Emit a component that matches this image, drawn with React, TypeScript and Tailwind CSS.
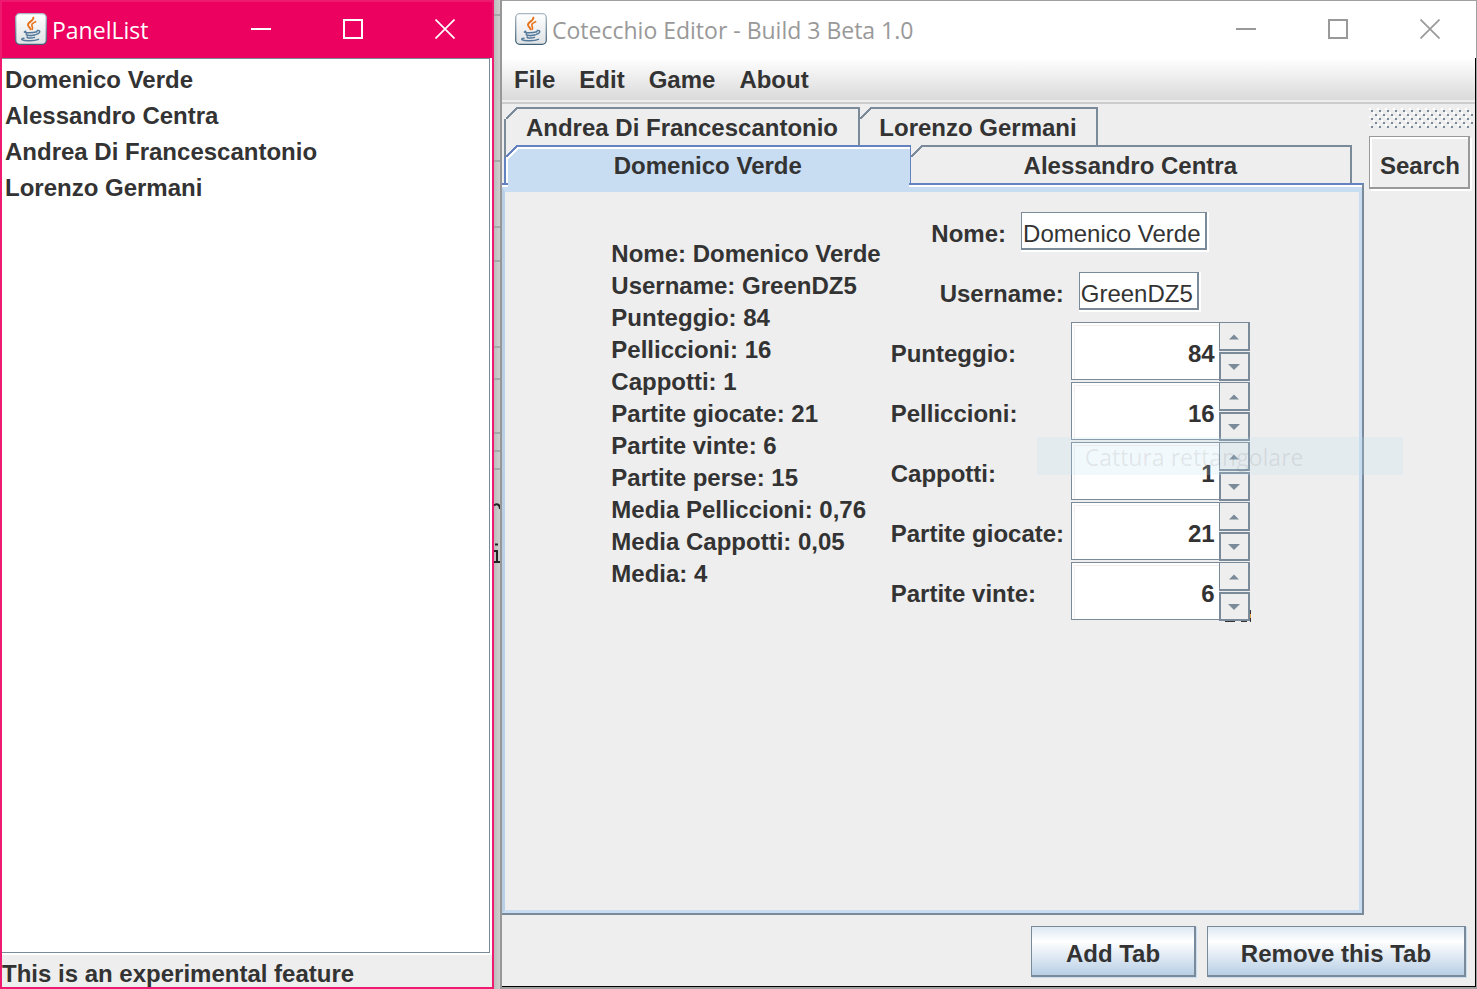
import React, { useState } from "react";

function JavaIcon() {
  return (
    <svg width="32" height="32" viewBox="0 0 32 32" aria-hidden="true" className="shrink-0">
      <defs>
        <linearGradient id="tile" x1="0" y1="0" x2="0" y2="1">
          <stop offset="0" stopColor="#ffffff" />
          <stop offset="1" stopColor="#dfe3e5" />
        </linearGradient>
        <linearGradient id="edge" x1="0" y1="0" x2="0" y2="1">
          <stop offset="0" stopColor="#a9b9c4" />
          <stop offset="1" stopColor="#3f6076" />
        </linearGradient>
      </defs>
      <rect x="0.7" y="0.7" width="30.6" height="30.6" rx="4" fill="url(#tile)" stroke="url(#edge)" strokeWidth="1.3" />
      <g fill="none" strokeLinecap="round">
        <path d="M18.300 4.600c1 3-5.600 4.300-5.300 7.400.2 1.700 2 2.500 2.600 4.400" stroke="#e8731a" strokeWidth="1.900" />
        <path d="M20.600 8.700c-2.600 1.100-4.300 2.300-3.700 4.100.4 1.200 1.200 1.800.3 3.500" stroke="#e8731a" strokeWidth="1.600" />
        <path d="M10.800 18.200c-2 .6-2 1.200 0 1.400 3.700.4 8 .1 11.200-.8" stroke="#54799a" strokeWidth="1.500" />
        <path d="M11.500 21c-.6 1 .4 1.400 3 1.500 2.300.1 4.300-.1 5.700-.7" stroke="#54799a" strokeWidth="1.700" />
        <path d="M12.200 23.800c-.4 1 .8 1.300 3 1.300 1.700 0 3.100-.2 4.300-.7" stroke="#54799a" strokeWidth="1.500" />
        <path d="M22.300 17.600c2-.5 2.800.4 2.300 1.600-.4 1-1.700 1.800-3 2.100" stroke="#54799a" strokeWidth="1.500" />
        <path d="M9 25.200c-3.300.7-3 1.700.5 2.200 4.500.6 11 .3 14-1" stroke="#54799a" strokeWidth="1.500" />
      </g>
    </svg>
  );
}

function WindowControls() {
  return (
    <div className="ml-auto flex">
      <button aria-label="Minimize" className="flex h-12 w-[92px] items-center justify-center">
        <svg width="20" height="20" viewBox="0 0 20 20" fill="none" stroke="currentColor" strokeWidth="2">
          <path d="M0 10H20" />
        </svg>
      </button>
      <button aria-label="Maximize" className="flex h-12 w-[92px] items-center justify-center">
        <svg width="20" height="20" viewBox="0 0 20 20" fill="none" stroke="currentColor" strokeWidth="2">
          <rect x="1" y="1" width="18" height="18" />
        </svg>
      </button>
      <button aria-label="Close" className="flex h-12 w-[92px] items-center justify-center">
        <svg width="20" height="20" viewBox="0 0 20 20" fill="none" stroke="currentColor" strokeWidth="1.700">
          <path d="M.5.5l19 19M19.500.5l-19 19" />
        </svg>
      </button>
    </div>
  );
}

const players = ["Domenico Verde", "Alessandro Centra", "Andrea Di Francescantonio", "Lorenzo Germani"];

function PanelList() {
  return (
    <section className="flex w-[494px] shrink-0 flex-col border-2 border-[#ed1a70] bg-[#eeeeee]">
      <header className="flex h-14 items-center bg-[#ec0060] pr-px pb-0.5 pl-[13px] text-white">
        <JavaIcon />
        <h1 className="pt-0.5 pl-[5px] font-['Open_Sans',sans-serif] text-[23px] leading-7">PanelList</h1>
        <WindowControls />
      </header>
      <div className="flex flex-1 flex-col bg-white pr-0.5 pb-0.5">
        <ul className="flex-1 border-t border-r border-b border-[#7a8a99] pt-[3px] pl-[3px]">
          {players.map((name) => (
            <li key={name} className="h-9 leading-9">
              {name}
            </li>
          ))}
        </ul>
      </div>
      <p className="h-8 pt-1.5 leading-[26px]">This is an experimental feature</p>
    </section>
  );
}

function Corner({ bordered = false, active = false }: { bordered?: boolean; active?: boolean }) {
  return (
    <svg
      width="14"
      height="14"
      viewBox="0 0 14 14"
      aria-hidden="true"
      className={`absolute -top-0.5 ${bordered ? "-left-0.5" : "-left-0.5"}`}
      shapeRendering="crispEdges"
    >
      <path d={bordered ? "M0 0H12V2L2 12H0Z" : "M2 0H12V2L2 12Z"} fill="#eeeeee" />
      {active && <path d="M0 0H2V12H0Z" fill="#7a8a99" />}
      {active && <path d="M3 13.500L13.500 3" stroke="#ffffff" strokeWidth="2.500" />}
      <path d="M2 12L12 2" stroke={active ? "#6382bf" : "#7a8a99"} strokeWidth="1.600" />
    </svg>
  );
}

function Tab({ label, className, bordered = false }: { label: string; className: string; bordered?: boolean }) {
  return (
    <button
      role="tab"
      aria-selected={false}
      className={`relative h-[38px] border-t-2 border-r-2 border-[#7a8a99] pt-0.5 leading-7 ${className}`}
    >
      <Corner bordered={bordered} />
      {label}
    </button>
  );
}

function Spinner({ label, initial }: { label: string; initial: number }) {
  const [value, setValue] = useState(initial);
  const id = label.toLowerCase().replace(" ", "-");
  return (
    <div className="flex h-[60px]">
      <label htmlFor={id} className="w-[180px] pt-[18px] leading-7">
        {label}:
      </label>
      <div className="flex h-[58px]">
        <div className="h-full w-[148px] border-t border-b border-l border-[#7a8a99] bg-white">
          <div className="h-full border-t-2 border-l-2 border-white">
            <input
              id={id}
              type="text"
              inputMode="numeric"
              value={value}
              onChange={(e) => setValue(Number(e.target.value) || 0)}
              className="h-full w-full border-t border-l border-[#f2eef0] bg-white pt-0.5 pr-1 text-right outline-none"
            />
          </div>
        </div>
        <div className="flex w-[31px] flex-col gap-px">
          <button
            aria-label={`Increase ${label}`}
            onClick={() => setValue(value + 1)}
            className="flex h-[29px] shrink-0 items-center justify-center border-t border-r-2 border-b-2 border-l border-[#7a8a99] bg-[#eeeeee]"
          >
            <svg width="12" height="6" viewBox="0 0 12 6" className="mt-0.5">
              <path d="M1 5.500L6 .5L11 5.500Z" fill="#7a8a99" />
            </svg>
          </button>
          <button
            aria-label={`Decrease ${label}`}
            onClick={() => setValue(value - 1)}
            className="flex h-[29px] shrink-0 items-center justify-center border-2 border-[#7a8a99] bg-[#eeeeee]"
          >
            <svg width="12" height="6" viewBox="0 0 12 6">
              <path d="M0 0L6 6L12 0Z" fill="#7a8a99" />
            </svg>
          </button>
        </div>
      </div>
    </div>
  );
}

function TextRow({ label, initial, width }: { label: string; initial: string; width: string }) {
  const id = label.toLowerCase();
  return (
    <div className="flex h-[60px] items-center justify-center">
      <label htmlFor={id} className="pt-1 pr-[15px] leading-7">
        {label}:
      </label>
      <div className="h-10 border-r-2 border-b-2 border-white">
        <input
          id={id}
          type="text"
          defaultValue={initial}
          className={`h-[38px] border-t border-r-2 border-b-2 border-l border-[#7a8a99] bg-white pt-1.5 pl-px font-normal outline-none ${width}`}
        />
      </div>
    </div>
  );
}

const stats = [
  "Nome: Domenico Verde",
  "Username: GreenDZ5",
  "Punteggio: 84",
  "Pelliccioni: 16",
  "Cappotti: 1",
  "Partite giocate: 21",
  "Partite vinte: 6",
  "Partite perse: 15",
  "Media Pelliccioni: 0,76",
  "Media Cappotti: 0,05",
  "Media: 4",
];

function PlayerForm() {
  return (
    <div className="flex flex-1 flex-col border-t-2 border-r-2 border-b-2 border-t-[#6382bf] border-r-[#7a8a99] border-b-[#7a8a99]">
      <div className="flex flex-1 flex-col border-t-2 border-white">
        <div className="flex flex-1 items-start justify-center gap-2.5 border-t-[5px] border-r-[3px] border-b-[3px] border-l-[3px] border-t-[#c8ddf2] border-r-[#c8ddf2] border-b-[#c8ddf2] border-l-[#b8cfe5] pt-2.5 pr-[3px]">
          <div className="pt-9 leading-8">
            {stats.map((line) => (
              <p key={line}>{line}</p>
            ))}
          </div>
          <form className="relative">
            <TextRow label="Nome" initial="Domenico Verde" width="w-[186px]" />
            <TextRow label="Username" initial="GreenDZ5" width="w-[120px]" />
            <Spinner label="Punteggio" initial={84} />
            <Spinner label="Pelliccioni" initial={16} />
            <Spinner label="Cappotti" initial={1} />
            <Spinner label="Partite giocate" initial={21} />
            <Spinner label="Partite vinte" initial={6} />
            <svg width="26" height="12" viewBox="0 0 26 12" aria-hidden="true" className="absolute -right-px bottom-0">
              <path d="M0 12H10M16 12H22" stroke="#333333" strokeWidth="2" />
              <path d="M26 0V5M26 8V12" stroke="#333333" strokeWidth="2" />
              <path d="M26 4V8" stroke="#e8a24a" strokeWidth="2" />
            </svg>
            <div className="pointer-events-none absolute top-[235px] left-[146px] h-[38px] w-[366px] bg-[#bee1f0]/20 pt-1 pl-12 font-['Open_Sans',sans-serif] text-[23px] leading-8 font-normal text-[#333333]/10">
              Cattura rettangolare
            </div>
          </form>
        </div>
      </div>
    </div>
  );
}

function ActionButton({ label, className }: { label: string; className: string }) {
  return (
    <button
      className={`h-[51px] border-t border-r-2 border-b-2 border-l border-[#7a8a99] bg-linear-to-b from-[#dde8f3] via-white via-30% to-[#b8cfe5] pt-1.5 leading-7 shadow-[1px_1px_0_#c8ddf2] ${className}`}
    >
      {label}
    </button>
  );
}

function Editor() {
  return (
    <section className="flex flex-1 flex-col border-t border-b-2 border-t-[#a0a0a0] border-b-[#a0a0a0] bg-[#eeeeee]">
      <header className="flex h-[57px] items-center bg-white pb-px pl-[13px] text-[#999999]">
        <JavaIcon />
        <h1 className="pt-0.5 pl-[5px] font-['Open_Sans',sans-serif] text-[23px] leading-7">
          Cotecchio Editor - Build 3 Beta 1.0
        </h1>
        <WindowControls />
      </header>
      <div className="flex flex-1 flex-col border-r border-b border-black">
        <nav className="border-b-2 border-[#cccccc]">
          <div className="flex h-[42px] gap-6 bg-linear-to-b from-white to-[#dadada] pt-2 pl-3 leading-7">
            <button className="h-7">File</button>
            <button className="h-7">Edit</button>
            <button className="h-7">Game</button>
            <button className="h-7">About</button>
          </div>
          <div className="h-0.5" />
        </nav>
        <div className="flex flex-1">
          <main className="flex flex-1 flex-col pt-[3px]">
            <div role="tablist" className="pr-3 pl-0.5">
              <div className="flex">
                <Tab label="Andrea Di Francescantonio" className="w-[356px] border-l-2" bordered />
                <Tab label="Lorenzo Germani" className="w-[238px]" />
              </div>
              <div className="flex">
                <button
                  role="tab"
                  aria-selected={true}
                  className="relative z-10 h-[38px] grow-[406] basis-0 border-t-2 border-r border-l-2 border-[#6382bf] bg-[#c8ddf2] pt-0.5 leading-7 shadow-[inset_2px_2px_0_#ffffff] after:absolute after:top-full after:right-px after:left-0.5 after:h-1 after:bg-[#c8ddf2]"
                >
                  <Corner bordered active />
                  Domenico Verde
                </button>
                <Tab label="Alessandro Centra" className="grow-[442] basis-0" />
              </div>
            </div>
            <PlayerForm />
          </main>
          <aside className="flex w-[111px] flex-col pt-1 pl-[5px]">
            <svg width="104" height="20" aria-hidden="true" shapeRendering="crispEdges">
              <defs>
                <pattern id="grip" width="8" height="8" patternUnits="userSpaceOnUse">
                  <path d="M0 0h2v2h-2zM4 4h2v2h-2z" fill="#ffffff" />
                  <path d="M2 2h2v2h-2zM6 6h2v2h-2z" fill="#7a8a99" />
                </pattern>
              </defs>
              <rect width="104" height="20" fill="url(#grip)" />
            </svg>
            <button className="mt-2 h-[53px] w-[101px] border-t border-r-2 border-b-2 border-l border-[#999999] pt-2 pl-0.5 leading-7 shadow-[2px_2px_0_#ffffff,inset_2px_2px_0_#ffffff]">
              Search
            </button>
          </aside>
        </div>
        <footer className="flex justify-end gap-[11px] pt-[11px] pr-[9px] pb-[9px]">
          <ActionButton label="Add Tab" className="w-[165px]" />
          <ActionButton label="Remove this Tab" className="w-[259px]" />
        </footer>
      </div>
    </section>
  );
}

function Desktop() {
  return (
    <div aria-hidden="true" className="relative w-2 shrink-0 overflow-hidden border-r-2 border-[#979797] bg-linear-to-r from-[#bcbcbc] to-[#cfcfcf]">
      <svg width="6" height="480" className="absolute top-0 left-0" stroke="#a4a8aa" strokeWidth="2">
        <path d="M0 15H6M0 161H6M0 227H6M0 261H6M0 347H6M0 379H6M0 433H6M0 451H6M0 469H6" />
      </svg>
      <svg width="8" height="64" className="absolute top-[500px] left-0" fill="none" stroke="#222222" strokeWidth="2">
        <path d="M0 5.500C2 3.500 6 3.500 6 9M0 51H3M3 50V62M0 62H7M1 44.500H4" />
      </svg>
    </div>
  );
}

export default function App() {
  return (
    <div className="flex min-h-screen bg-[#c8c8c8] font-['Liberation_Sans',Arial,sans-serif] text-2xl font-bold text-[#333333] [&_h1]:font-normal">
      <PanelList />
      <Desktop />
      <div className="flex flex-1 border-r border-[#a0a0a0]">
        <Editor />
      </div>
    </div>
  );
}
